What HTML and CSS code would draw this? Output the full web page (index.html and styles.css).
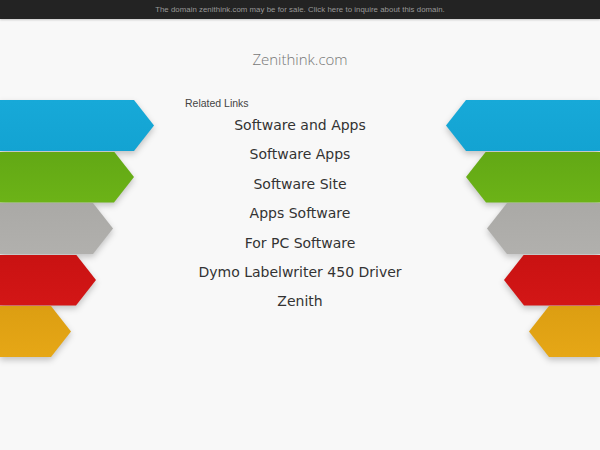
FILE: index.html
```html
<!DOCTYPE html>
<html>
<head>
<meta charset="utf-8">
<link rel="stylesheet" href="styles.css">
</head>
<body>
<div class="topbar"><span class="notice">The domain zenithink.com may be for sale. Click here to inquire about this domain.</span></div>
<div class="title">Zenithink.com</div>
<div class="main">
  <div class="arrows left">
    <div class="arrow blue w1"></div>
    <div class="arrow green w2"></div>
    <div class="arrow gray w3"></div>
    <div class="arrow red w4"></div>
    <div class="arrow orange w5"></div>
  </div>
  <div class="center">
    <div class="related">Related Links</div>
    <ul class="links">
      <li><a href="#">Software and Apps</a></li>
      <li><a href="#">Software Apps</a></li>
      <li><a href="#">Software Site</a></li>
      <li><a href="#">Apps Software</a></li>
      <li><a href="#">For PC Software</a></li>
      <li><a href="#">Dymo Labelwriter 450 Driver</a></li>
      <li><a href="#">Zenith</a></li>
    </ul>
  </div>
  <div class="arrows right">
    <div class="arrow blue w1"></div>
    <div class="arrow green w2"></div>
    <div class="arrow gray w3"></div>
    <div class="arrow red w4"></div>
    <div class="arrow orange w5"></div>
  </div>
</div>
</body>
</html>
```
FILE: styles.css
```css
html, body {
  margin: 0;
  padding: 0;
  background: #f8f8f8;
  font-family: "DejaVu Sans", sans-serif;
  width: 600px;
  height: 450px;
  overflow: hidden;
}
.topbar {
  height: 19px;
  background: #232323;
  display: flex;
  align-items: center;
  justify-content: center;
  box-shadow: 0 1px 2px rgba(0,0,0,.2);
}
.notice {
  color: #999;
  font-family: "Liberation Sans", Arial, sans-serif;
  font-size: 7.8px;
  letter-spacing: 0.05px;
}
.title {
  margin-top: 30px;
  text-align: center;
  font-family: "Open Sans", sans-serif;
  font-weight: 300;
  font-size: 15px;
  color: #777;
  height: 20px;
  line-height: 20px;
}
.main {
  margin-top: 31px;
  display: grid;
  grid-template-columns: 154px 1fr 154px;
}
.arrows {
  display: flex;
  flex-direction: column;
  filter: drop-shadow(0 3px 3px rgba(0,0,0,.22));
}
.arrows.right { align-items: flex-end; }
.arrow {
  height: 51px;
  margin-bottom: 0.5px;
}
.left .arrow { clip-path: polygon(0 0, calc(100% - 20px) 0, 100% 50%, calc(100% - 20px) 100%, 0 100%); }
.right .arrow { clip-path: polygon(20px 0, 100% 0, 100% 100%, 20px 100%, 0 50%); }
.w1 { width: 154px; }
.w2 { width: 134px; }
.w3 { width: 113px; }
.w4 { width: 96px; }
.w5 { width: 71px; }
.blue { background: linear-gradient(#17a9d8, #13a3d2); }
.green { background: linear-gradient(#62a815, #6cb317); }
.gray { background: linear-gradient(#aaa9a6, #b1b0ad); }
.red { background: linear-gradient(#c91212, #d31616); }
.orange { background: linear-gradient(#dc9e12, #e6a716); }
.center {
  padding: 0 0 0 31px;
}
.related {
  font-family: "Liberation Sans", Arial, sans-serif;
  font-size: 10.5px;
  color: #444;
  height: 13px;
  line-height: 13px;
  margin-top: -3px;
}
.links {
  list-style: none;
  margin: 0 0 0 -31px;
  padding: 0;
  text-align: center;
}
.links li {
  height: 29.4px;
  line-height: 29.4px;
}
.links a {
  color: #333;
  font-size: 14px;
  text-decoration: none;
}
```
